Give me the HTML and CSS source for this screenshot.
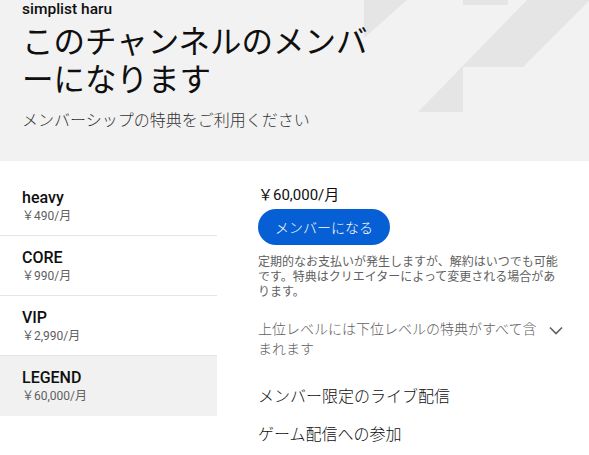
FILE: index.html
```html
<!DOCTYPE html>
<html lang="ja">
<head>
<meta charset="utf-8">
<link rel="stylesheet" href="styles.css">
</head>
<body>
<header class="header">
  <svg class="deco" width="589" height="161" viewBox="0 0 589 161" aria-hidden="true">
    <polygon points="364,0 407,0 364,38" />
    <rect x="463" y="0" width="45" height="5" />
    <polygon points="527,0 590,0 523,67 463,67 463,112 418,112" />
  </svg>
  <div class="header-content">
    <div class="channel">simplist haru</div>
    <h1 class="title">このチャンネルのメンバーになります</h1>
    <p class="subtitle">メンバーシップの特典をご利用ください</p>
  </div>
</header>
<main class="main">
  <ul class="tiers">
    <li class="tier"><div class="tier-name">heavy</div><div class="tier-price">￥490/月</div></li>
    <li class="tier"><div class="tier-name">CORE</div><div class="tier-price">￥990/月</div></li>
    <li class="tier"><div class="tier-name">VIP</div><div class="tier-price">￥2,990/月</div></li>
    <li class="tier tier-selected"><div class="tier-name">LEGEND</div><div class="tier-price">￥60,000/月</div></li>
  </ul>
  <section class="detail">
    <div class="price">￥60,000/月</div>
    <button class="join">メンバーになる</button>
    <p class="note">定期的なお支払いが発生しますが、解約はいつでも可能です。特典はクリエイターによって変更される場合があります。</p>
    <div class="levels">
      <span class="levels-text">上位レベルには下位レベルの特典がすべて含まれます</span>
      <svg class="chevron" width="24" height="24" viewBox="0 0 24 24" aria-hidden="true"><path d="M6 9.5l6 6 6-6" fill="none" stroke="#606060" stroke-width="1.6"/></svg>
    </div>
    <ul class="perks">
      <li>メンバー限定のライブ配信</li>
      <li>ゲーム配信への参加</li>
    </ul>
  </section>
</main>
</body>
</html>
```
FILE: styles.css
```css
* { box-sizing: border-box; }
html, body { margin: 0; padding: 0; background: #fff; }
body {
  font-family: Roboto, "Noto Sans CJK JP", sans-serif;
  color: #0f0f0f;
  width: 589px;
  overflow: hidden;
}
.header {
  position: relative;
  height: 161px;
  background: #f2f2f2;
  overflow: hidden;
}
.deco {
  position: absolute;
  top: 0;
  left: 0;
  fill: #e5e5e5;
}
.header-content {
  position: relative;
  padding: 0 22px;
}
.channel {
  font-size: 15.5px;
  font-weight: 500;
  line-height: 19px;
}
.title {
  margin: 1px 0 0;
  width: 370px;
  font-size: 31.5px;
  font-weight: 400;
  line-height: 38px;
  font-family: "Noto Sans CJK JP", sans-serif;
}
.subtitle {
  margin: 11px 0 0;
  font-size: 16px;
  line-height: 24px;
  color: #333;
  font-family: "Noto Sans CJK JP", sans-serif;
  font-weight: 300;
}
.main {
  display: flex;
}
.tiers {
  list-style: none;
  margin: 0;
  padding: 15px 0 0;
  width: 217px;
  flex: none;
}
.tier {
  height: 60px;
  padding: 12px 22px 0;
  border-bottom: 1px solid #e5e5e5;
}
.tier-selected {
  background: #f1f1f1;
  border-bottom: none;
}
.tier-name {
  font-size: 16px;
  font-weight: 500;
  line-height: 20px;
}
.tier-price {
  font-size: 12px;
  line-height: 16px;
  color: #606060;
}
.detail {
  flex: 1;
  padding: 24px 15px 0 41px;
}
.price {
  font-size: 15px;
  line-height: 20px;
}
.join {
  margin-top: 4px;
  height: 36px;
  padding: 0 17px;
  border: none;
  border-radius: 18px;
  background: #065fd4;
  color: #fff;
  font-family: "Noto Sans CJK JP", sans-serif;
  font-size: 14px;
  font-weight: 300;
}
.note {
  margin: 8px 0 0;
  width: 301px;
  font-size: 12px;
  line-height: 15px;
  color: #606060;
  font-family: "Noto Sans CJK JP", sans-serif;
}
.levels {
  margin-top: 20px;
  width: 310px;
  display: flex;
  align-items: flex-start;
  color: #606060;
}
.levels-text {
  flex: none;
  width: 279px;
  font-size: 14px;
  line-height: 20px;
  font-family: "Noto Sans CJK JP", sans-serif;
  font-weight: 300;
}
.chevron {
  flex: none;
  margin-left: auto;
}
.perks {
  list-style: none;
  margin: 25px 0 0;
  padding: 0;
  display: flex;
  flex-direction: column;
  gap: 14px;
  font-size: 16px;
  line-height: 24px;
  font-family: "Noto Sans CJK JP", sans-serif;
  font-weight: 300;
}
```
